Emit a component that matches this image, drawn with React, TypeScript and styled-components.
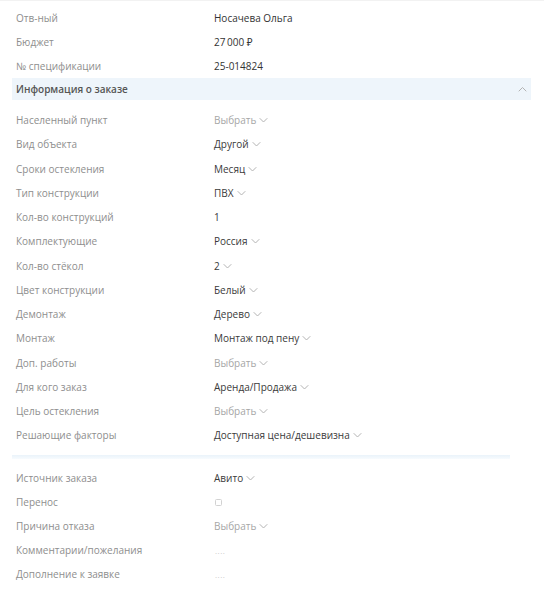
import React from "react";
import styled, { createGlobalStyle } from "styled-components";

const GlobalStyle = createGlobalStyle`
  html, body {
    margin: 0;
    padding: 0;
    background: #fff;
  }
  body {
    font-family: "Open Sans", "Noto Sans", sans-serif;
    font-size: 10px;
    color: #333;
  }
`;

type Tone = "plain" | "strong" | "muted";

type Field = {
  label: string;
  value?: string;
  tone?: Tone;
  select?: boolean;
  kind?: "checkbox" | "empty";
};

const topFields: Field[] = [
  { label: "Отв-ный", value: "Носачева Ольга" },
  { label: "Бюджет", value: "27\u2009000 ₽" },
  { label: "№ спецификации", value: "25-014824" },
];

const orderFields: Field[] = [
  { label: "Населенный пункт", value: "Выбрать", tone: "muted", select: true },
  { label: "Вид объекта", value: "Другой", tone: "strong", select: true },
  { label: "Сроки остекления", value: "Месяц", tone: "strong", select: true },
  { label: "Тип конструкции", value: "ПВХ", tone: "strong", select: true },
  { label: "Кол-во конструкций", value: "1", tone: "strong" },
  { label: "Комплектующие", value: "Россия", tone: "strong", select: true },
  { label: "Кол-во стёкол", value: "2", tone: "strong", select: true },
  { label: "Цвет конструкции", value: "Белый", tone: "strong", select: true },
  { label: "Демонтаж", value: "Дерево", tone: "strong", select: true },
  { label: "Монтаж", value: "Монтаж под пену", tone: "strong", select: true },
  { label: "Доп. работы", value: "Выбрать", tone: "muted", select: true },
  { label: "Для кого заказ", value: "Аренда/Продажа", tone: "strong", select: true },
  { label: "Цель остекления", value: "Выбрать", tone: "muted", select: true },
  { label: "Решающие факторы", value: "Доступная цена/дешевизна", tone: "strong", select: true },
];

const extraFields: Field[] = [
  { label: "Источник заказа", value: "Авито", tone: "strong", select: true },
  { label: "Перенос", kind: "checkbox" },
  { label: "Причина отказа", value: "Выбрать", tone: "muted", select: true },
  { label: "Комментарии/пожелания", kind: "empty" },
  { label: "Дополнение к заявке", kind: "empty" },
];

const Page = styled.div`
  width: 544px;
  height: 598px;
  border-top: 1px solid #f2f2f2;
  box-sizing: border-box;
  padding-top: 5px;
`;

const Group = styled.div`
  display: flex;
  flex-direction: column;
`;

const Row = styled.div<{ $h?: number }>`
  display: grid;
  grid-template-columns: 198px 1fr;
  align-items: center;
  height: ${(p) => p.$h ?? 24}px;
  padding-left: 16px;
`;

const Label = styled.span`
  color: #8e8e8e;
  white-space: nowrap;
`;

const Value = styled.span<{ $tone: Tone }>`
  display: inline-flex;
  align-items: center;
  gap: 3px;
  white-space: nowrap;
  color: ${(p) => (p.$tone === "muted" ? "#a6a6a6" : p.$tone === "strong" ? "#3a3a3a" : "#333")};
  font-weight: ${(p) => (p.$tone === "strong" ? 500 : 400)};
`;

const Section = styled.div`
  display: flex;
  align-items: center;
  justify-content: space-between;
  height: 22px;
  margin: 0 13px 8px 12px;
  padding: 0 4px 0 4px;
  background: #eef5fb;
  color: #555;
  font-weight: 600;
`;

const Divider = styled.div`
  height: 4px;
  margin: 7px 34px 7px 12px;
  background: linear-gradient(to bottom, #eaf3fa, #f7fbfe);
`;

const Check = styled.span`
  display: inline-block;
  box-sizing: border-box;
  width: 7px;
  height: 7px;
  margin-left: 1px;
  border: 1px solid #d2d2d2;
  border-radius: 1.5px;
  vertical-align: middle;
`;

const Dots = styled.span`
  color: #c9c9c9;
  font-size: 8px;
  letter-spacing: 0.5px;
  padding-left: 1px;
`;

const Chevron = ({ up }: { up?: boolean }) => (
  <svg width="9" height="6" viewBox="0 0 9 6" fill="none">
    <path
      d={up ? "M1 5 L4.5 1.5 L8 5" : "M1 1.5 L4.5 5 L8 1.5"}
      stroke="#b3b3b3"
      strokeWidth="1"
      strokeLinecap="round"
      strokeLinejoin="round"
    />
  </svg>
);

const FieldRow = ({ field, h }: { field: Field; h?: number }) => (
  <Row $h={h}>
    <Label>{field.label}</Label>
    <div>
      {field.kind === "checkbox" ? (
        <Check />
      ) : field.kind === "empty" ? (
        <Dots>....</Dots>
      ) : (
        <Value $tone={field.tone ?? "plain"}>
          {field.value}
          {field.select && <Chevron />}
        </Value>
      )}
    </div>
  </Row>
);

export default function App() {
  return (
    <>
      <GlobalStyle />
      <Page>
        <Group>
          {topFields.map((f) => (
            <FieldRow key={f.label} field={f} />
          ))}
        </Group>
        <Section>
          <span>Информация о заказе</span>
          <Chevron up />
        </Section>
        <Group>
          {orderFields.map((f) => (
            <FieldRow key={f.label} field={f} h={24.25} />
          ))}
        </Group>
        <Divider />
        <Group>
          {extraFields.map((f) => (
            <FieldRow key={f.label} field={f} />
          ))}
        </Group>
      </Page>
    </>
  );
}
